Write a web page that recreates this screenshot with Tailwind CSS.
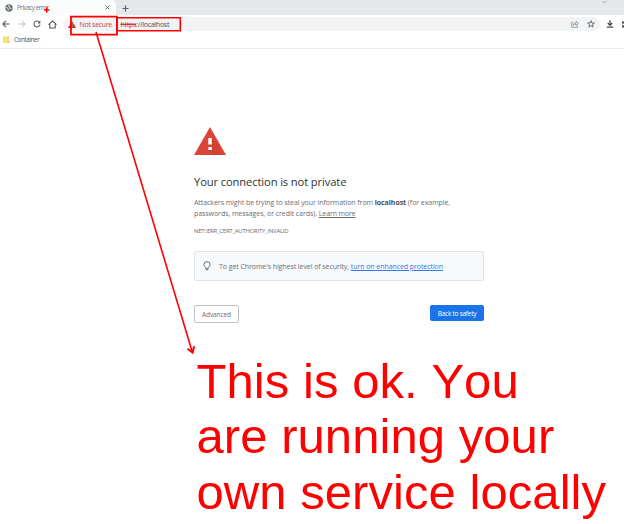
<!DOCTYPE html>
<html lang="en">
<head>
<meta charset="utf-8">
<title>Privacy error</title>
<script src="https://cdn.jsdelivr.net/npm/@tailwindcss/browser@4"></script>
</head>
<body class="relative h-[524px] w-[624px] overflow-hidden bg-white font-['Open_Sans','Noto_Sans',sans-serif] text-[#6a6e73]">
<header class="flex flex-col whitespace-nowrap">
  <div class="flex h-[15px] items-start bg-[#e4e8eb] pt-0">
    <div class="flex h-[15px] w-[116px] items-center rounded-tr bg-[#fbfcfc] pl-[5px] pr-[6px]">
      <svg class="size-[8px] shrink-0" viewBox="0 0 8 8"><circle cx="4" cy="4" r="3.7" fill="#6b6f73"/><path d="M1 3.3L2.7 4L3.3 5.3L3 6.8M4 .8L3.4 2.2L5 3L4.6 4.2L6.4 4.8" fill="none" stroke="#e5e7e9" stroke-width="1"/></svg>
      <span class="ml-[4px] text-[6.4px] leading-[14px] tracking-[-0.5px] text-[#74787c]">Privacy error</span>
      <svg class="ml-auto size-[5px]" viewBox="0 0 5 5"><path d="M.6 .6L4.4 4.4M4.4 .6L.6 4.4" stroke="#5f6368" stroke-width=".9"/></svg>
    </div>
    <svg class="ml-[6px] mt-[5px] size-[7px]" viewBox="0 0 7 7"><path d="M3.5 .5V6.5M.5 3.5H6.5" stroke="#5f6368" stroke-width="1.2"/></svg>
    <svg class="ml-auto mr-[17px] h-[4px] w-[5px]" viewBox="0 0 5 4"><path d="M.3 .8L2.5 3.2L4.7 .8" fill="none" stroke="#9aa0a6" stroke-width=".8"/></svg>
  </div>
  <div class="flex h-[18px] items-center">
    <svg class="ml-[2px] size-[8px]" viewBox="0 0 8 8"><path d="M7.5 4H1M4 .9L.9 4L4 7.1" fill="none" stroke="#55595e" stroke-width="1.1"/></svg>
    <svg class="ml-[8px] size-[8px]" viewBox="0 0 8 8"><path d="M.5 4H7M4 .9L7.1 4L4 7.1" fill="none" stroke="#b8bbbe" stroke-width="1"/></svg>
    <svg class="ml-[7px] size-[8px]" viewBox="0 0 8 8"><path d="M6.5 2.2A3 3 0 1 0 7 4.5" fill="none" stroke="#55595e" stroke-width="1.1"/><path d="M7.3 .5V3.4H4.4Z" fill="#55595e"/></svg>
    <svg class="ml-[7px] size-[9px]" viewBox="0 0 9 9"><path d="M.5 4.7L4.5 1L8.5 4.7M1.8 4.2V8H7.2V4.2" fill="none" stroke="#55595e" stroke-width="1.1"/></svg>
    <div class="ml-[6px] flex h-[14px] w-[537px] shrink-0 items-center rounded-full bg-[#f1f3f4] pl-[5px] pr-[5px]">
      <svg class="h-[7px] w-[8px] shrink-0" viewBox="0 0 8 7"><path d="M4 0L8 7H0Z" fill="#c5322b"/><path d="M4 2.4V4.4M4 5V5.9" stroke="#e7aaa6" stroke-width=".7"/></svg>
      <span class="ml-[3.5px] w-[41px] pt-[1px] text-[7px] leading-[13px] tracking-[-0.3px] text-[#d0453e]">Not secure</span>
      <span class="pt-[1px] text-[7px] leading-[13px] tracking-[-0.27px] text-[#4b4f54]"><span class="text-[#cf3b35] line-through">https</span>://localhost</span>
      <svg class="ml-auto size-[8px]" viewBox="0 0 8 8"><path d="M2.3 2.2H.7V7.3H6.5V5.6M2.2 5.4Q2.5 2.9 5.2 2.8V1.2L7.5 3.3L5.2 5.3V4Q3.3 3.9 2.2 5.4Z" fill="none" stroke="#7b7f83" stroke-width=".7"/></svg>
      <svg class="ml-[8px] size-[8px]" viewBox="0 0 8 8"><path d="M4 .7L4.9 3H7.4L5.4 4.6L6.1 7.1L4 5.7L1.9 7.1L2.6 4.6L.6 3H3.1Z" fill="none" stroke="#5f6368" stroke-width=".9"/></svg>
    </div>
    <svg class="ml-[6px] size-[8px] shrink-0" viewBox="0 0 8 8"><path d="M4 .3V5M1.7 3L4 5.4L6.3 3M.8 7.2H7.2" fill="none" stroke="#45494d" stroke-width="1.2"/></svg>
    <svg class="ml-auto h-[7px] w-[2px] shrink-0" viewBox="0 0 2 7"><path d="M0 .5H2V2.5H1V4.2H2V6.5H0V4.5H.7V2.5H0Z" fill="#45494d"/></svg>
  </div>
  <div class="flex h-[16px] items-center border-b border-[#e7e9eb] pb-[2px]">
    <svg class="ml-[3px] size-[7px]" viewBox="0 0 7 7"><path d="M0 .5H4L4.7 0H6.2V7H0Z" fill="#fbdc7d"/><path d="M4.5 5H6.5V7H4.5Z" fill="#f0cb60"/></svg>
    <span class="ml-[4px] text-[6.4px] leading-[12px] tracking-[-0.45px] text-[#505458]">Container</span>
  </div>
</header>

<main class="ml-[194px] w-[290px] pt-[78px] whitespace-nowrap">
  <svg class="h-[28px] w-[32px]" viewBox="0 0 32 28"><path d="M16 0L32 28H0Z" fill="#db4437"/><path d="M18 11L26 19V28H18L14 23Z" fill="#c93f33" opacity=".4"/><path d="M14.3 11H17.8V17.5H14.3ZM14.3 20H17.8V23H14.3Z" fill="#fff"/></svg>
  <h1 class="mt-[19px] text-[11.2px] leading-[16px] tracking-[-0.12px] text-[#303236]">Your connection is not private</h1>
  <p class="mt-[6px] pt-[0.5px] text-[7px] leading-[11.5px] tracking-[-0.06px]">Attackers might be trying to steal your information from <b class="text-[#4b4e52]">localhost</b> (for example,<br>passwords, messages, or credit cards). <a class="tracking-[-0.11px] underline">Learn more</a></p>
  <p class="mt-[5.5px] h-[11px] pt-[1px] text-[6px] leading-[11px] tracking-[-0.26px]">NET::ERR_CERT_AUTHORITY_INVALID</p>
  <div class="mt-[15px] flex h-[30px] items-center rounded-[2px] border border-[#e1e4e8] bg-[#f8f9fb] pl-[8px]">
    <svg class="h-[10px] w-[8px]" viewBox="0 0 8 10"><path d="M2.5 6.4Q.9 5.3 .9 3.7A3.1 3.1 0 0 1 7.1 3.7Q7.1 5.3 5.5 6.4V7.3H2.5Z" fill="none" stroke="#5f6368" stroke-width=".9"/><path d="M2.7 8.2H5.3V9.2H2.7Z" fill="#5f6368"/></svg>
    <span class="ml-[8px] pt-[1.5px] text-[7px] tracking-[-0.07px]">To get Chrome's highest level of security, <a class="text-[#3478e5] underline">turn on enhanced protection</a></span>
  </div>
  <div class="mt-[24px] flex items-start justify-between text-[6.6px] tracking-[-0.15px]">
    <div class="flex h-[18px] w-[45px] items-center justify-center rounded-[2px] border border-[#bec1c5] pt-[1px]">Advanced</div>
    <div class="flex h-[16px] w-[54px] items-center justify-center rounded-[2px] bg-[#1a73e8] pt-[1px] tracking-[-0.3px] text-white">Back to safety</div>
  </div>
</main>

<svg class="absolute left-0 top-0 h-[524px] w-[624px]" viewBox="0 0 624 524" fill="none" stroke="#f00">
  <path d="M71 16.7H117V34.7H71Z" stroke-width="1.8"/>
  <path d="M116.8 17.8H180.3V30.7H116.8Z" stroke-width="1.6"/>
  <path d="M46.7 7.3V12.8M44 10H49.4" stroke-width="1.5"/>
  <path d="M96 32L192.3 352" stroke-width="1.6"/>
  <path d="M187.5 348.8L192.6 352.6L194.2 346.3" stroke-width="2"/>
</svg>
<p class="absolute left-[196.5px] top-[353.5px] whitespace-nowrap font-['Liberation_Sans',Arial,sans-serif] text-[49px] leading-[55.5px] tracking-[0.06px] text-[#f00] [font-kerning:none]">This is ok. You<br>are running your<br>own service locally</p>
</body>
</html>
